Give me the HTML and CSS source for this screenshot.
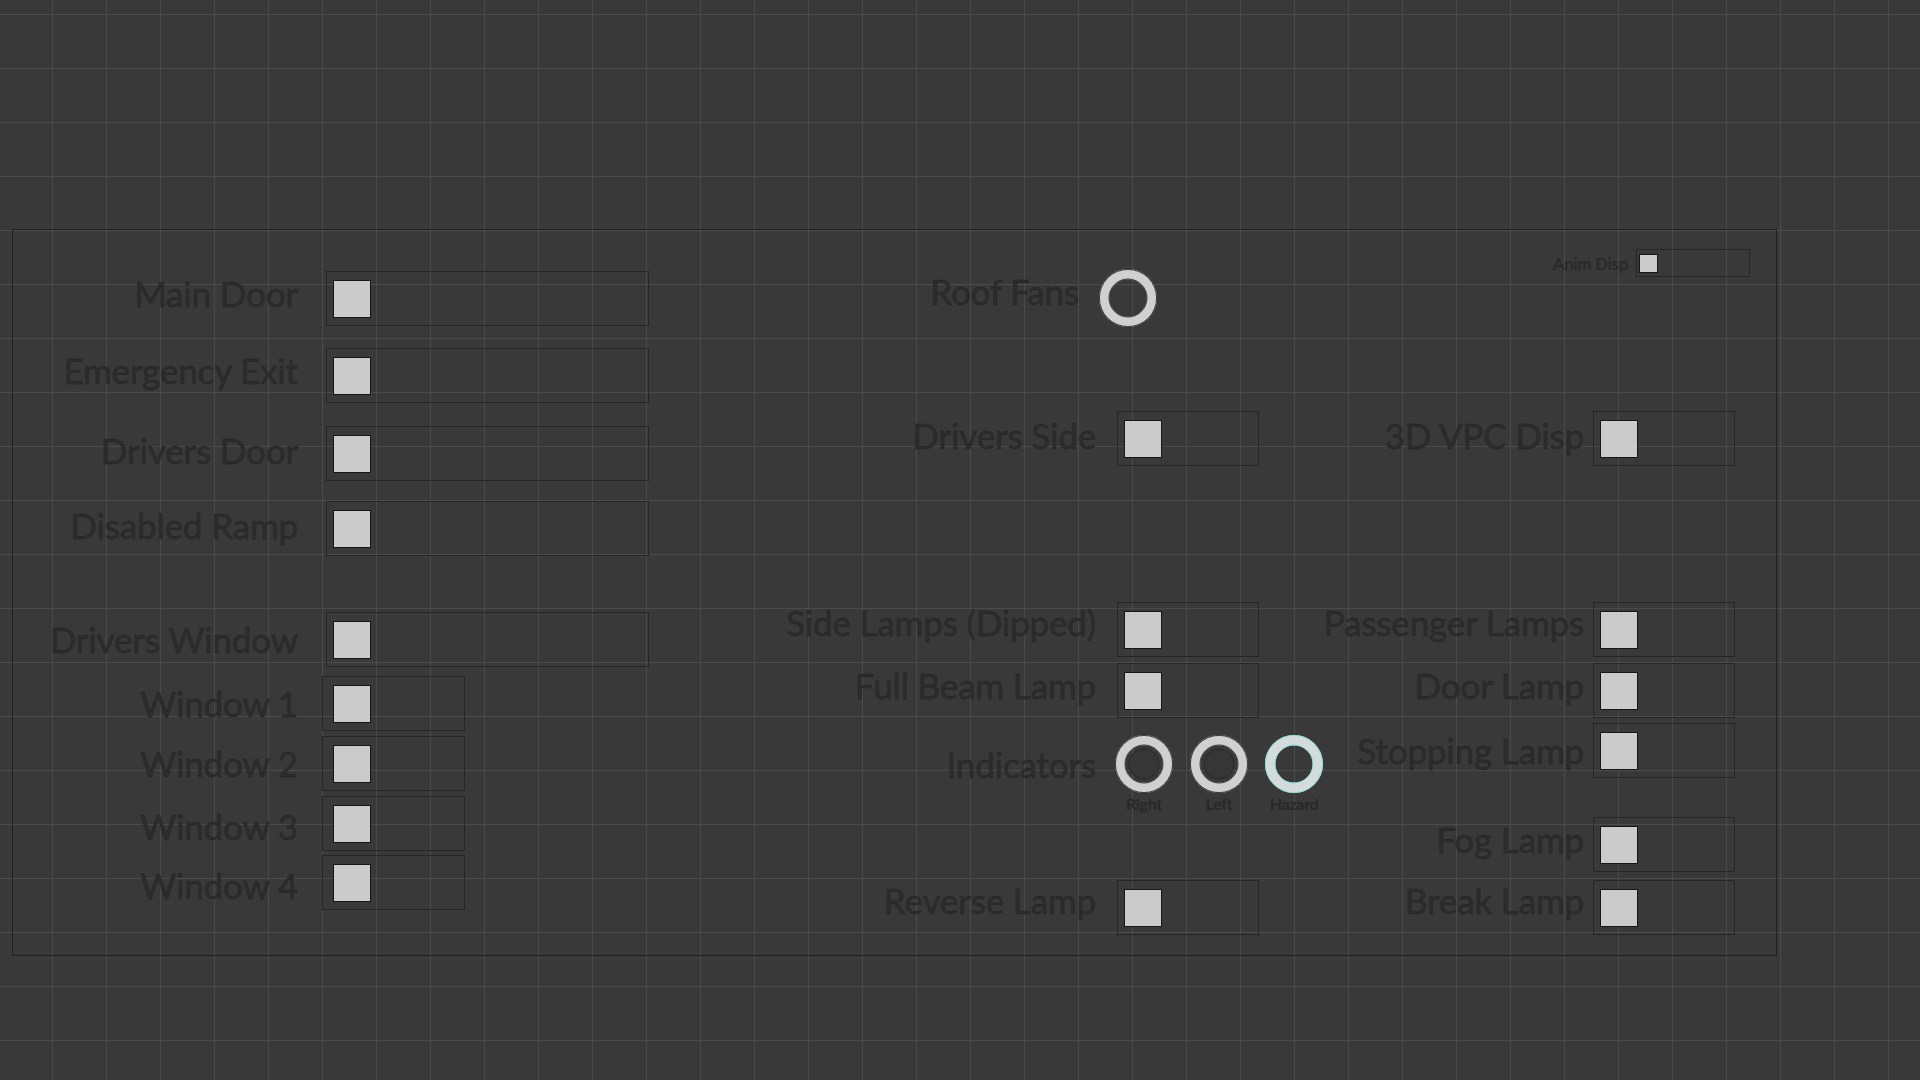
FILE: index.html
```html
<!DOCTYPE html>
<html>
<head>
<title>Vehicle Controls</title>
<link rel="stylesheet" href="styles.css">
</head>
<body>
<div class="panel">

<!-- Doors and windows -->
<div class="col">
<div class="row m41"><span class="label">Main Door</span><div class="box wide"><span class="check"></span></div></div>
<div class="row m22"><span class="label">Emergency Exit</span><div class="box wide"><span class="check"></span></div></div>
<div class="row m23"><span class="label t-mid">Drivers Door</span><div class="box wide"><span class="check"></span></div></div>
<div class="row m20"><span class="label t-mid">Disabled Ramp</span><div class="box wide"><span class="check"></span></div></div>
<div class="row m56"><span class="label t-lo">Drivers Window</span><div class="box wide"><span class="check"></span></div></div>
<div class="row win m9"><span class="label t-lo">Window 1</span><div class="box"><span class="check"></span></div></div>
<div class="row win m5"><span class="label t-lo">Window 2</span><div class="box"><span class="check"></span></div></div>
<div class="row win m5"><span class="label t-low">Window 3</span><div class="box"><span class="check"></span></div></div>
<div class="row win m4"><span class="label t-low">Window 4</span><div class="box"><span class="check"></span></div></div>
</div>

<!-- Fans and lamps -->
<div class="col mid">
<div class="row roof m39">
<span class="label">Roof Fans</span>
<svg class="ring" viewBox="0 0 58 58"><circle cx="29" cy="29" r="23.8" fill="none" stroke="#d0d0d0" stroke-width="10.4"/><circle cx="29" cy="29" r="28.6" fill="none" stroke="#161616" stroke-width="0.8"/><circle cx="29" cy="29" r="19" fill="none" stroke="#161616" stroke-width="0.8"/></svg>
</div>
<div class="row m84"><span class="label t-mid">Drivers Side</span><div class="box"><span class="check"></span></div></div>
<div class="row m136"><span class="label t-hi">Side Lamps (Dipped)</span><div class="box"><span class="check"></span></div></div>
<div class="row m6"><span class="label">Full Beam Lamp</span><div class="box"><span class="check"></span></div></div>
<div class="row indicators m17">
<span class="label">Indicators</span>
<div class="lamp">
<svg class="ring" viewBox="0 0 58 58"><circle cx="29" cy="29" r="23.8" fill="none" stroke="#d0d0d0" stroke-width="10.4"/><circle cx="29" cy="29" r="28.6" fill="none" stroke="#161616" stroke-width="0.8"/><circle cx="29" cy="29" r="19" fill="none" stroke="#161616" stroke-width="0.8"/><circle cx="29" cy="29" r="15" fill="#363636" stroke="#2a2a2a" stroke-width="1"/></svg>
<span class="cap">Right</span>
</div>
<div class="lamp">
<svg class="ring" viewBox="0 0 58 58"><circle cx="29" cy="29" r="23.8" fill="none" stroke="#d0d0d0" stroke-width="10.4"/><circle cx="29" cy="29" r="28.6" fill="none" stroke="#161616" stroke-width="0.8"/><circle cx="29" cy="29" r="19" fill="none" stroke="#161616" stroke-width="0.8"/><circle cx="29" cy="29" r="15" fill="#363636" stroke="#2a2a2a" stroke-width="1"/></svg>
<span class="cap">Left</span>
</div>
<div class="lamp">
<svg class="ring" viewBox="0 0 58 58"><circle cx="29" cy="29" r="23.8" fill="none" stroke="#d4dbdb" stroke-width="10.4"/><circle cx="29" cy="29" r="28.6" fill="none" stroke="#7fdede" stroke-width="0.8"/><circle cx="29" cy="29" r="19" fill="none" stroke="#7fdede" stroke-width="0.8"/></svg>
<span class="cap">Hazard</span>
</div>
</div>
<div class="row m69"><span class="label t-hi">Reverse Lamp</span><div class="box"><span class="check"></span></div></div>
</div>

<!-- Display and body lamps -->
<div class="col">
<div class="row anim m19"><span class="small-label">Anim Disp</span><div class="box mini"><span class="check"></span></div></div>
<div class="row m134"><span class="label t-mid">3D VPC Disp</span><div class="box"><span class="check"></span></div></div>
<div class="row m136"><span class="label t-hi">Passenger Lamps</span><div class="box"><span class="check"></span></div></div>
<div class="row m6"><span class="label">Door Lamp</span><div class="box"><span class="check"></span></div></div>
<div class="row m5"><span class="label t-lo">Stopping Lamp</span><div class="box"><span class="check"></span></div></div>
<div class="row m39"><span class="label">Fog Lamp</span><div class="box"><span class="check"></span></div></div>
<div class="row m8"><span class="label t-hi">Break Lamp</span><div class="box"><span class="check"></span></div></div>
</div>

</div>
</body>
</html>
```

FILE: styles.css
```css
html, body { margin: 0; height: 100%; }
body {
  background-color: #393939;
  background-image: linear-gradient(to right, #4b4b4b 1px, transparent 1px), linear-gradient(to bottom, #4b4b4b 1px, transparent 1px);
  background-size: 54px 54px;
  background-position: 52px 14px;
  font-family: Lato, "Open Sans", sans-serif;
  overflow: hidden;
}

.panel {
  margin: 229px 0 0 12px;
  width: 1765px;
  height: 727px;
  box-sizing: border-box;
  border: 1px solid #202020;
  display: grid;
  grid-template-columns: 647px 640px 1fr;
}
.col { display: flex; flex-direction: column; }

.row { display: flex; align-items: center; height: 55px; }
.row > * { flex-shrink: 0; }
.label {
  width: 285px;
  margin-right: 28px;
  margin-bottom: 12px;
  text-align: right;
  white-space: nowrap;
  font-size: 35px;
  letter-spacing: -0.15px;
  color: #2c2c2c;
  -webkit-text-stroke: 0.35px #212121;
}
.mid .label { width: 436px; margin-right: 21px; }
.col:last-child .label { width: 284px; margin-right: 9px; }

/* label baseline nudges */
.label.t-hi { margin-bottom: 16px; }
.label.t-mid { margin-bottom: 7px; }
.label.t-lo { margin-bottom: 1px; }
.label.t-low { margin-bottom: -4px; }

.box {
  width: 142px;
  height: 55px;
  box-sizing: border-box;
  border: 1px solid #262626;
  padding-left: 6px;
  display: flex;
  align-items: center;
}
.box.wide { width: 323px; }
.win .label { margin-right: 24px; }
.win .box { width: 143px; padding-left: 10px; }

.check {
  width: 38px;
  height: 38px;
  box-sizing: border-box;
  background: #cbcbcb;
  border: 1px solid #161616;
}

/* roof fans and indicators */
.ring { width: 58px; height: 58px; display: block; }
.row.roof { height: 58px; }
.roof .label { width: 419px; margin-right: 20px; margin-bottom: 14px; }

.row.indicators { height: 76px; align-items: flex-start; }
.indicators .label { line-height: 58px; margin-right: 19px; margin-bottom: 0; }
.lamp { width: 58px; margin-right: 17px; display: flex; flex-direction: column; align-items: center; }
.cap {
  padding-top: 2px;
  font-size: 16px;
  line-height: 18px;
  font-weight: 700;
  letter-spacing: -0.3px;
  color: #282828;
}

/* anim display toggle */
.row.anim { height: 28px; justify-content: flex-end; margin-right: 26px; }
.small-label { font-size: 17px; font-weight: 700; letter-spacing: -0.3px; color: #2a2a2a; margin-right: 8px; }
.box.mini { width: 114px; height: 28px; padding-left: 2px; }
.mini .check { width: 19px; height: 19px; }

/* row spacing */
.m4 { margin-top: 4px; }
.m5 { margin-top: 5px; }
.m6 { margin-top: 6px; }
.m8 { margin-top: 8px; }
.m9 { margin-top: 9px; }
.m17 { margin-top: 17px; }
.m19 { margin-top: 19px; }
.m20 { margin-top: 20px; }
.m22 { margin-top: 22px; }
.m23 { margin-top: 23px; }
.m39 { margin-top: 39px; }
.m41 { margin-top: 41px; }
.m56 { margin-top: 56px; }
.m69 { margin-top: 69px; }
.m84 { margin-top: 84px; }
.m134 { margin-top: 134px; }
.m136 { margin-top: 136px; }
```
